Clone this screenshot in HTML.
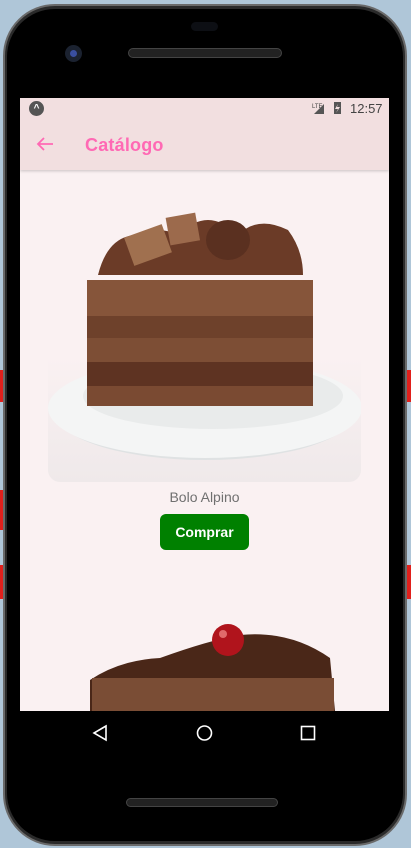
<!DOCTYPE html>
<html><head><meta charset="utf-8"><style>
*{margin:0;padding:0;box-sizing:border-box}
body{width:411px;height:848px;overflow:hidden;background:#afc6d8;font-family:"Liberation Sans",Roboto,sans-serif;position:relative}
.abs{position:absolute}
</style></head><body>
<div class="abs" style="left:0;top:370px;width:6px;height:32px;background:#e0201c"></div>
<div class="abs" style="left:0;top:490px;width:6px;height:40px;background:#e0201c"></div>
<div class="abs" style="left:0;top:565px;width:6px;height:34px;background:#e0201c"></div>
<div class="abs" style="left:405px;top:370px;width:6px;height:32px;background:#e0201c"></div>
<div class="abs" style="left:405px;top:565px;width:6px;height:34px;background:#e0201c"></div>
<div class="abs" style="left:3px;top:4px;width:404px;height:842px;border-radius:52px;background:#2a2a2a;border:2px solid #6a6a6a"></div>
<div class="abs" style="left:7px;top:9px;width:396px;height:832px;border-radius:48px;background:#000"></div>
<div class="abs" style="left:191px;top:22px;width:27px;height:9px;border-radius:5px;background:#0d0f14"></div>
<div class="abs" style="left:65px;top:45px;width:17px;height:17px;border-radius:50%;background:#1b2230"><div style="margin:5px;width:7px;height:7px;border-radius:50%;background:#3a4fa0"></div></div>
<div class="abs" style="left:128px;top:48px;width:154px;height:10px;border-radius:5px;background:#222;border:1px solid #444"></div>
<div class="abs" style="left:126px;top:798px;width:152px;height:9px;border-radius:5px;background:#222;border:1px solid #444"></div>
<div class="abs" style="left:20px;top:98px;width:369px;height:613px;background:#faf1f2;overflow:hidden">
 <div class="abs" style="left:0;top:0;width:369px;height:72px;background:#f2dfe0;box-shadow:0 1px 3px rgba(0,0,0,.2)"></div>
 <div class="abs" style="left:9px;top:3px;width:15px;height:15px;border-radius:50%;background:#555;color:#fff;font-size:10px;text-align:center;line-height:15px;font-weight:bold">^</div>
 <svg class="abs" style="left:292px;top:3px" width="36" height="14"><text x="0" y="7" font-size="6" fill="#444" font-family="Liberation Sans">LTE</text><polygon points="2,13 12,13 12,3" fill="#555"/><rect x="22" y="1" width="7" height="12" fill="#555"/><polygon points="26,3 23,8 26,8 24,12 28,6 25,6" fill="#f2dfe0"/></svg>
 <div class="abs" style="left:330px;top:3px;font-size:13px;color:#444">12:57</div>
 <svg class="abs" style="left:16px;top:38px" width="18" height="16"><path d="M17 8H2M8 2L2 8l6 6" stroke="#ff69b4" stroke-width="1.8" fill="none"/></svg>
 <div class="abs" style="left:65px;top:37px;font-size:18px;font-weight:bold;color:#ff69b4;letter-spacing:.2px">Catálogo</div>
 <div class="abs" style="left:28px;top:102px;width:313px;height:282px;border-radius:0 0 12px 12px;overflow:hidden;background:linear-gradient(#faf1f2 0%,#faf1f2 55%,#efe9ea 100%)">
  <svg width="313" height="282">
   <ellipse cx="157" cy="212" rx="150" ry="48" fill="#dfe2e3"/>
   <ellipse cx="157" cy="208" rx="157" ry="50" fill="#f4f5f5"/>
   <ellipse cx="165" cy="196" rx="130" ry="33" fill="#e9ebeb"/>
   <rect x="39" y="80" width="226" height="126" rx="6" fill="#7a4a32"/>
   <rect x="39" y="80" width="226" height="36" fill="#86553a"/>
   <rect x="39" y="116" width="226" height="22" fill="#6e412b"/>
   <rect x="39" y="138" width="226" height="24" fill="#7d4e35"/>
   <rect x="39" y="162" width="226" height="24" fill="#5e3322"/>
   <rect x="39" y="186" width="226" height="20" fill="#7a4a32"/>
   <path d="M50 75 q10 -40 40 -40 q20 -10 40 0 q30 -30 60 0 q20 -20 50 -5 q15 20 15 45 z" fill="#6b3b27"/>
   <rect x="120" y="15" width="30" height="28" fill="#9c6a4c" transform="rotate(-10 135 30)"/>
   <rect x="80" y="30" width="40" height="30" fill="#a0704f" transform="rotate(-20 100 45)"/>
   <ellipse cx="180" cy="40" rx="22" ry="20" fill="#5a3020"/>
  </svg>
 </div>
 <div class="abs" style="left:0;width:369px;top:391px;text-align:center;font-size:14px;color:#707070">Bolo Alpino</div>
 <div class="abs" style="left:140px;top:416px;width:89px;height:36px;border-radius:6px;background:#008000;color:#fff;font-weight:bold;font-size:14px;text-align:center;line-height:36px">Comprar</div>
 <svg class="abs" style="left:60px;top:522px" width="260" height="91">
  <path d="M10 60 Q40 40 80 38 Q130 20 160 15 Q210 10 250 38 L255 91 L10 91 Z" fill="#4a2718"/>
  <rect x="12" y="58" width="242" height="33" fill="#7a4d35"/>
  <circle cx="148" cy="20" r="16" fill="#b0141c"/>
  <circle cx="143" cy="14" r="4" fill="#e06a6a"/>
 </svg>
</div>
<svg class="abs" style="left:0;top:711px" width="411" height="45">
 <path d="M106 15 L94 22 L106 29 Z" fill="none" stroke="#fff" stroke-width="1.6"/>
 <circle cx="204.5" cy="22" r="7" fill="none" stroke="#fff" stroke-width="1.6"/>
 <rect x="301.5" y="15.5" width="13" height="13" fill="none" stroke="#fff" stroke-width="1.6"/>
</svg>
</body></html>
